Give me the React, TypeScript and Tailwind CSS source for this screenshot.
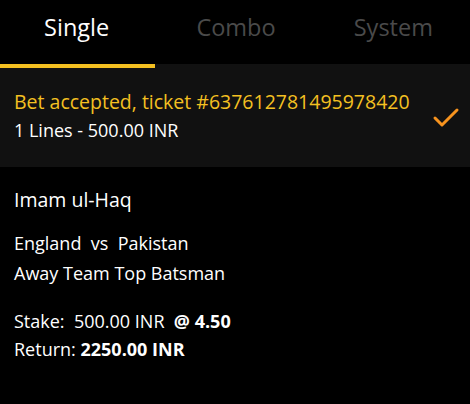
import React from "react";

export default function App() {
  const font = { fontFamily: '"Open Sans", "Noto Sans", sans-serif' };
  return (
    <div className="w-[470px] h-[404px] bg-black text-white" style={font}>
      <div className="flex h-[64px] pb-[8px]">
        <div className="flex-1 flex items-center justify-center text-[23.5px] text-white pr-[6px]">Single</div>
        <div className="flex-1 flex items-center justify-center text-[23.5px] text-[#4a4a4a]">Combo</div>
        <div className="flex-1 flex items-center justify-center text-[23.5px] text-[#4a4a4a] pl-[4px]">System</div>
      </div>
      <div className="flex h-[4px]">
        <div className="w-[155px] bg-[#f4c021]" />
        <div className="flex-1 bg-[#111111]" />
      </div>
      <div className="bg-[#111111] h-[99px] flex items-center justify-between pl-[14px] pr-[10px] pb-[4px]">
        <div className="flex flex-col">
          <div className="text-[19.5px] leading-[29px] text-[#f4c021]">Bet accepted, ticket #637612781495978420</div>
          <div className="text-[18px] leading-[29px] text-white">1 Lines - 500.00 INR</div>
        </div>
        <svg width="28" height="22" viewBox="0 0 28 22" className="mt-[2px]">
          <path d="M3 12 L10 19 L25 4" fill="none" stroke="#f7931e" strokeWidth="3" strokeLinecap="round" strokeLinejoin="round" />
        </svg>
      </div>
      <div className="px-[14px] pt-[19px]">
        <div className="text-[19.5px] leading-[28px]">Imam ul-Haq</div>
        <div className="mt-[14px] text-[18px] leading-[30px]">England&nbsp;&nbsp;vs&nbsp;&nbsp;Pakistan</div>
        <div className="text-[18px] leading-[30px]">Away Team Top Batsman</div>
        <div className="mt-[19px] text-[18px] leading-[28px]">
          Stake:&nbsp;&nbsp;500.00 INR&nbsp;&nbsp;<span className="font-bold">@ 4.50</span>
        </div>
        <div className="text-[18px] leading-[28px]">
          Return: <span className="font-bold">2250.00 INR</span>
        </div>
      </div>
    </div>
  );
}
